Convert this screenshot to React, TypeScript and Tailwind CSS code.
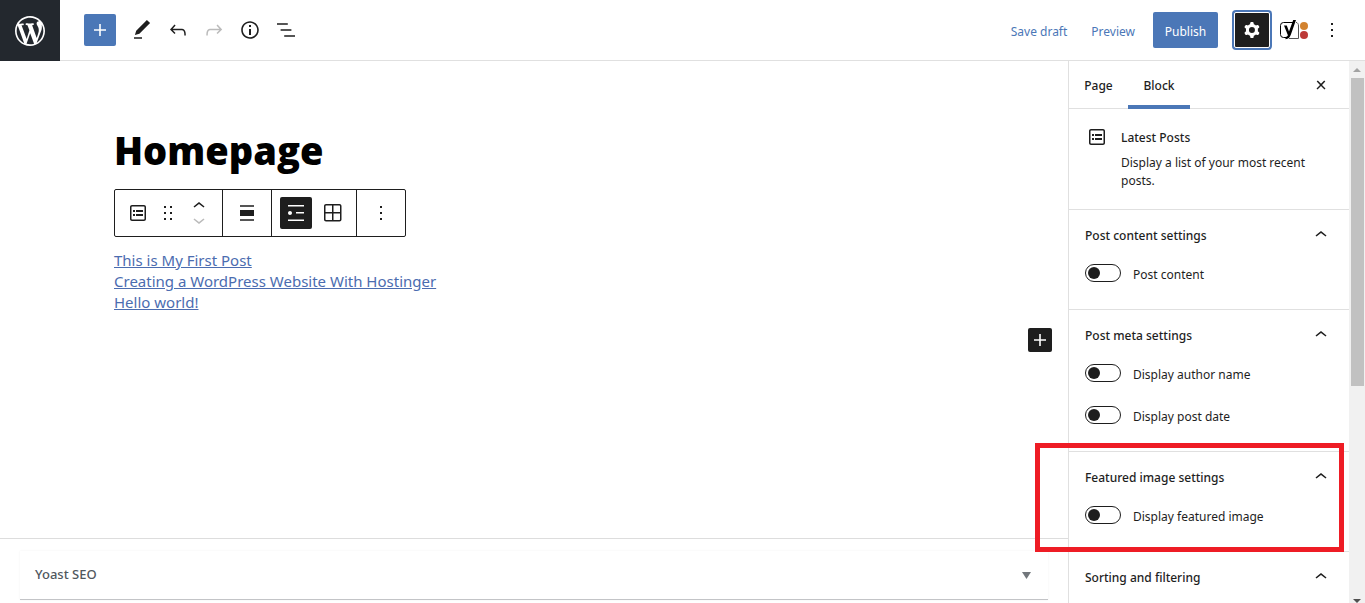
import { useState } from 'react'

const icons = {
  wordpress:
    'M20 10c0-5.51-4.49-10-10-10C4.48 0 0 4.49 0 10c0 5.52 4.48 10 10 10 5.51 0 10-4.48 10-10zM7.78 15.37L4.37 6.22c.55-.02 1.17-.08 1.17-.08.5-.06.44-1.13-.06-1.11 0 0-1.45.11-2.37.11-.18 0-.37 0-.58-.01C4.12 2.69 6.87 1.11 10 1.11c2.33 0 4.45.87 6.05 2.34-.68-.11-1.65.39-1.65 1.58 0 .74.45 1.36.9 2.1.35.61.55 1.36.55 2.46 0 1.49-1.4 5-1.4 5l-3.03-8.37c.54-.02.82-.17.82-.17.5-.05.44-1.25-.06-1.22 0 0-1.44.12-2.38.12-.87 0-2.33-.12-2.33-.12-.5-.03-.56 1.2-.06 1.22l.92.08 1.26 3.41zM17.41 10c.24-.64.74-1.87.43-4.25.7 1.29 1.05 2.71 1.05 4.25 0 3.29-1.73 6.24-4.4 7.78.97-2.59 1.94-5.2 2.92-7.78zM6.1 18.09C3.12 16.65 1.11 13.53 1.11 10c0-1.3.23-2.48.72-3.59C3.25 10.3 4.67 14.2 6.1 18.09zm4.03-6.63l2.58 6.98c-.86.29-1.76.45-2.71.45-.79 0-1.57-.11-2.29-.33.81-2.38 1.62-4.74 2.42-7.1z',
  plus: 'M18 11.2h-5.2V6h-1.6v5.2H6v1.6h5.2V18h1.6v-5.2H18z',
  pencil:
    'M20.1 5.1L16.9 2 6.2 12.7l-1.3 4.4 4.5-1.3L20.1 5.1zM4 20.8h8v-1.5H4v1.5z',
  undo: 'M18.3 11.7c-.6-.6-1.4-.9-2.3-.9H6.7l2.9-3.3-1.1-1-4.5 5L8.5 16l1-1-2.7-2.7H16c.5 0 .9.2 1.3.5 1 1 1 3.4 1 4.5v.3h1.5v-.2c0-1.5 0-4.3-1.5-5.7z',
  redo: 'M15.6 6.5l-1.1 1 2.9 3.3H8c-.9 0-1.7.3-2.3.9-1.4 1.5-1.4 4.2-1.4 5.6v.2h1.5v-.3c0-1.1 0-3.5 1-4.5.3-.3.7-.5 1.3-.5h9.2L14.5 15l1.1 1.1 4.6-4.6-4.6-5z',
  info: 'M12 3.2c-4.8 0-8.8 3.9-8.8 8.8 0 4.8 3.9 8.8 8.8 8.8 4.8 0 8.8-3.9 8.8-8.8 0-4.8-4-8.8-8.8-8.8zm0 16c-4 0-7.2-3.3-7.2-7.2C4.8 8 8 4.8 12 4.8s7.2 3.3 7.2 7.2c0 4-3.2 7.2-7.2 7.2zM11 17h2v-6h-2v6zm0-8h2V7h-2v2z',
  outline:
    'M13.8 5.2H3v1.5h10.8V5.2zm-3.6 12v1.5H21v-1.5H10.2zm7.2-6H6.6v1.5h10.8v-1.5z',
  cog: 'M10.289 4.836A1 1 0 0111.275 4h1.306a1 1 0 01.987.836l.244 1.466c.787.26 1.503.679 2.108 1.218l1.393-.522a1 1 0 011.216.437l.653 1.13a1 1 0 01-.23 1.273l-1.148.944a6.025 6.025 0 010 2.435l1.149.946a1 1 0 01.23 1.272l-.653 1.13a1 1 0 01-1.216.437l-1.394-.522c-.605.54-1.32.958-2.108 1.218l-.244 1.466a1 1 0 01-.987.836h-1.306a1 1 0 01-.986-.836l-.244-1.466a5.995 5.995 0 01-2.108-1.218l-1.394.522a1 1 0 01-1.217-.436l-.653-1.131a1 1 0 01.23-1.272l1.149-.946a6.026 6.026 0 010-2.435l-1.148-.944a1 1 0 01-.23-1.272l.653-1.131a1 1 0 011.217-.437l1.393.522a5.994 5.994 0 012.108-1.218l.244-1.466zM14.929 12a3 3 0 11-6 0 3 3 0 016 0z',
  more: 'M13 19h-2v-2h2v2zm0-6h-2v-2h2v2zm0-6h-2V5h2v2z',
  postList:
    'M18 4H6c-1.1 0-2 .9-2 2v12c0 1.1.9 2 2 2h12c1.1 0 2-.9 2-2V6c0-1.1-.9-2-2-2zm.5 14c0 .3-.2.5-.5.5H6c-.3 0-.5-.2-.5-.5V6c0-.3.2-.5.5-.5h12c.3 0 .5.2.5.5v12zM7 11h2V9H7v2zm0 4h2v-2H7v2zm3-4h7V9h-7v2zm0 4h7v-2h-7v2z',
  drag: 'M8 7h2V5H8v2zm6-2v2h2V5h-2zm-6 8h2v-2H8v2zm6 0h2v-2h-2v2zm-6 6h2v-2H8v2zm6 0h2v-2h-2v2z',
  up: 'M6.5 12.4L12 8l5.5 4.4-.9 1.2L12 10l-4.5 3.6-1-1.2z',
  down: 'M17.5 11.6L12 16l-5.5-4.4.9-1.2L12 14l4.5-3.6 1 1.2z',
  align: 'M5 15h14V9H5v6zm0 4.8h14v-1.5H5v1.5zM5 4.2v1.5h14V4.2H5z',
  list: 'M4 4v1.5h16V4H4zm8 8.5h8V11h-8v1.5zM4 20h16v-1.5H4V20zm4-8c0-1.1-.9-2-2-2s-2 .9-2 2 .9 2 2 2 2-.9 2-2z',
  grid: 'M3 5c0-1.1.9-2 2-2h13.5c1.1 0 2 .9 2 2v13.5c0 1.1-.9 2-2 2H5c-1.1 0-2-.9-2-2V5zm2-.5h6V11H4.5V5c0-.3.2-.5.5-.5zm-.5 8v6c0 .3.2.5.5.5h6v-6.5H4.5zm8 0V19h6c.3 0 .5-.2.5-.5v-6h-6.500zm0-8V11H19V5c0-.3-.2-.5-.5-.5h-6z',
  close: 'M13 11.9l3.3-3.4-1.1-1-3.2 3.3-3.2-3.3-1.1 1 3.3 3.4-3.5 3.6 1 1L12 13l3.5 3.5 1-1z',
}

interface IconProps {
  name: keyof typeof icons
  className?: string
}

function Icon({ name, className = 'size-6' }: IconProps) {
  return (
    <svg
      viewBox={name === 'wordpress' ? '-2 -2 24 24' : '0 0 24 24'}
      className={`shrink-0 fill-current ${className}`}
      aria-hidden="true"
    >
      <path fillRule="evenodd" d={icons[name]} />
    </svg>
  )
}

function YoastIcon() {
  return (
    <svg viewBox="0 0 30 24" className="h-6 w-[30px]" aria-hidden="true">
      <path
        d="M14 4.500H3.500a3 3 0 0 0-3 3v9a3 3 0 0 0 3 3H6"
        fill="none"
        stroke="#000"
      />
      <path
        d="M9 20.500h9.500V8c0-2-.7-3.200-2.500-3.700"
        fill="none"
        stroke="#555"
      />
      <path
        d="M4 7.500h2.800l2.200 6L13.200 2H16l-5.200 14.700c-1 2.800-2.200 4.300-5.300 4.500v-2.300c1.500-.2 2.100-.8 2.400-1.700z"
        fill="#000"
      />
      <circle cx="24" cy="8" r="4" fill="#d2822f" />
      <circle cx="24" cy="17" r="4" fill="#bd3a38" />
    </svg>
  )
}

function Header() {
  return (
    <header className="flex h-[61px] shrink-0 border-b border-[#e0e0e0]">
      <a
        href="#"
        aria-label="View pages"
        className="-mb-px flex w-[60px] shrink-0 items-center justify-center bg-[#23282e] text-white"
      >
        <Icon name="wordpress" className="size-9" />
      </a>

      <div className="flex items-center gap-3 pl-6">
        <button
          aria-label="Add block"
          className="mr-[2px] flex size-8 items-center justify-center rounded-xs bg-[#4b77b7] text-white"
        >
          <Icon name="plus" />
        </button>
        <button aria-label="Tools">
          <Icon name="pencil" />
        </button>
        <button aria-label="Undo">
          <Icon name="undo" />
        </button>
        <button aria-label="Redo" disabled className="text-[#bbb]">
          <Icon name="redo" />
        </button>
        <button aria-label="Details">
          <Icon name="info" />
        </button>
        <button aria-label="Outline">
          <Icon name="outline" />
        </button>
      </div>

      <div className="ml-auto flex items-center pr-[21px]">
        <button className="pt-[3px] text-[#4b77b7]">Save draft</button>
        <button className="ml-6 pt-[3px] text-[#4b77b7]">Preview</button>
        <button className="ml-[18px] h-9 w-[65px] rounded-xs bg-[#4b77b7] pt-[3px] text-white">
          Publish
        </button>
        <button
          aria-label="Settings"
          className="ml-4 flex size-9 items-center justify-center rounded-xs border border-white bg-[#1e1e1e] text-white ring-2 ring-[#4b77b7]"
        >
          <Icon name="cog" />
        </button>
        <button aria-label="Yoast SEO" className="ml-[10px]">
          <YoastIcon />
        </button>
        <button aria-label="Options" className="ml-[10px]">
          <Icon name="more" />
        </button>
      </div>
    </header>
  )
}

function BlockToolbar() {
  return (
    <div
      role="toolbar"
      className="flex h-12 w-fit divide-x divide-[#1e1e1e] rounded-xs border border-[#1e1e1e]"
    >
      <div className="flex items-center gap-[6px] px-[11px]">
        <button aria-label="Latest Posts">
          <Icon name="postList" />
        </button>
        <button aria-label="Drag">
          <Icon name="drag" />
        </button>
        <div className="ml-px flex flex-col">
          <button
            aria-label="Move up"
            className="flex h-[19px] items-start overflow-hidden"
          >
            <Icon name="up" />
          </button>
          <button
            aria-label="Move down"
            disabled
            className="flex h-[19px] items-end overflow-hidden text-[#bbb]"
          >
            <Icon name="down" />
          </button>
        </div>
      </div>
      <div className="flex items-center px-3">
        <button aria-label="Align">
          <Icon name="align" />
        </button>
      </div>
      <div className="flex items-center gap-[9px] px-2">
        <button
          aria-label="List view"
          className="flex size-8 items-center justify-center rounded-xs bg-[#1e1e1e] text-white"
        >
          <Icon name="list" />
        </button>
        <button aria-label="Grid view" className="pr-[3px]">
          <Icon name="grid" />
        </button>
      </div>
      <div className="flex items-center px-3">
        <button aria-label="Options">
          <Icon name="more" />
        </button>
      </div>
    </div>
  )
}

const posts = [
  'This is My First Post',
  'Creating a WordPress Website With Hostinger',
  'Hello world!',
]

function Editor() {
  return (
    <main className="flex min-w-0 flex-1 flex-col">
      <div className="flex flex-1 flex-col pt-[65px] pr-4 pl-[114px]">
        <h1 className="font-['Open_Sans',sans-serif] text-[38px] leading-[48px] font-extrabold text-black">
          Homepage
        </h1>
        <div className="mt-[15px]">
          <BlockToolbar />
        </div>
        <ul className="mt-[13px] text-[15px] leading-[21px] text-[#4b6cb0]">
          {posts.map((post) => (
            <li key={post}>
              <a href="#" className="underline">
                {post}
              </a>
            </li>
          ))}
        </ul>
        <button
          aria-label="Add block"
          className="mt-[15px] flex size-6 items-center justify-center self-end rounded-xs bg-[#1e1e1e] text-white"
        >
          <Icon name="plus" />
        </button>
      </div>

      <div className="shrink-0 border-t border-[#ddd] pt-3 pr-5 pb-[3px] pl-5">
        <button className="flex h-[49px] w-full items-center justify-between border-b border-[#c3c4c7] pr-[17px] pl-[15px] text-[13px] font-medium text-[#50575e] shadow-[0_0_2px_rgba(0,0,0,0.06)]">
          Yoast SEO
          <svg viewBox="0 0 9 7" className="h-[7px] w-[9px] fill-[#72777c]">
            <path d="M0 0h9L4.500 7z" />
          </svg>
        </button>
      </div>
    </main>
  )
}

function Toggle({ label }: { label: string }) {
  const [checked, setChecked] = useState(false)

  return (
    <label className="flex h-[26px] items-center gap-3">
      <input
        type="checkbox"
        checked={checked}
        onChange={(event) => setChecked(event.target.checked)}
        className="flex h-[18px] w-9 shrink-0 appearance-none items-center rounded-full border border-[#1e1e1e] bg-white px-[2px] before:size-3 before:rounded-full before:bg-[#1e1e1e] checked:justify-end"
      />
      <span className="pt-[3px]">{label}</span>
    </label>
  )
}

interface PanelProps {
  title: string
  toggles: string[]
  highlighted?: boolean
}

function Panel({ title, toggles, highlighted }: PanelProps) {
  return (
    <section className="relative border-b border-[#e0e0e0] px-4 pb-[23px]">
      <h2>
        <button className="flex h-[50px] w-full items-center justify-between font-medium">
          <span className="pt-[2px]">{title}</span>
          <Icon name="up" />
        </button>
      </h2>
      <div className="flex flex-col gap-4">
        {toggles.map((label) => (
          <Toggle key={label} label={label} />
        ))}
      </div>
      {highlighted && (
        <div className="pointer-events-none absolute -top-[9px] right-[5px] -bottom-px -left-[34px] border-5 border-[#ee1c25]" />
      )}
    </section>
  )
}

function Sidebar() {
  return (
    <aside className="w-[281px] shrink-0 border-l border-[#e0e0e0]">
      <div className="flex h-12 items-stretch border-b border-[#e0e0e0] pr-4 font-medium">
        <button className="w-[59px] pt-[2px]">Page</button>
        <button className="-mb-px w-[62px] border-b-4 border-[#4b77b7] pt-[6px]">
          Block
        </button>
        <button aria-label="Close settings" className="ml-auto">
          <Icon name="close" />
        </button>
      </div>

      <div className="flex gap-3 border-b border-[#e0e0e0] p-4 pb-[19px]">
        <Icon name="postList" />
        <div className="pt-px">
          <h2 className="leading-6 font-medium">Latest Posts</h2>
          <p className="mt-1 leading-[18px]">
            Display a list of your most recent posts.
          </p>
        </div>
      </div>

      <Panel title="Post content settings" toggles={['Post content']} />
      <Panel
        title="Post meta settings"
        toggles={['Display author name', 'Display post date']}
      />
      <Panel
        title="Featured image settings"
        toggles={['Display featured image']}
        highlighted
      />
      <Panel title="Sorting and filtering" toggles={[]} />
    </aside>
  )
}

function Scrollbar() {
  return (
    <div className="flex w-4 shrink-0 flex-col items-center bg-[#f1f1f1]">
      <svg viewBox="0 0 16 17" className="h-[17px] w-4 fill-[#a3a3a3]">
        <path d="M4 11h8L8 7z" />
      </svg>
      <div className="h-[308px] w-[13px] bg-[#c1c1c1]" />
      <svg viewBox="0 0 16 8" className="mt-auto h-2 w-4 fill-[#505050]">
        <path d="M4 4h8L8 8z" />
      </svg>
    </div>
  )
}

export default function App() {
  return (
    <div className="flex h-screen flex-col overflow-hidden bg-white font-['Noto_Sans','Open_Sans',sans-serif] text-[12px] text-[#1e1e1e]">
      <Header />
      <div className="flex min-h-0 flex-1">
        <Editor />
        <Sidebar />
        <Scrollbar />
      </div>
    </div>
  )
}
